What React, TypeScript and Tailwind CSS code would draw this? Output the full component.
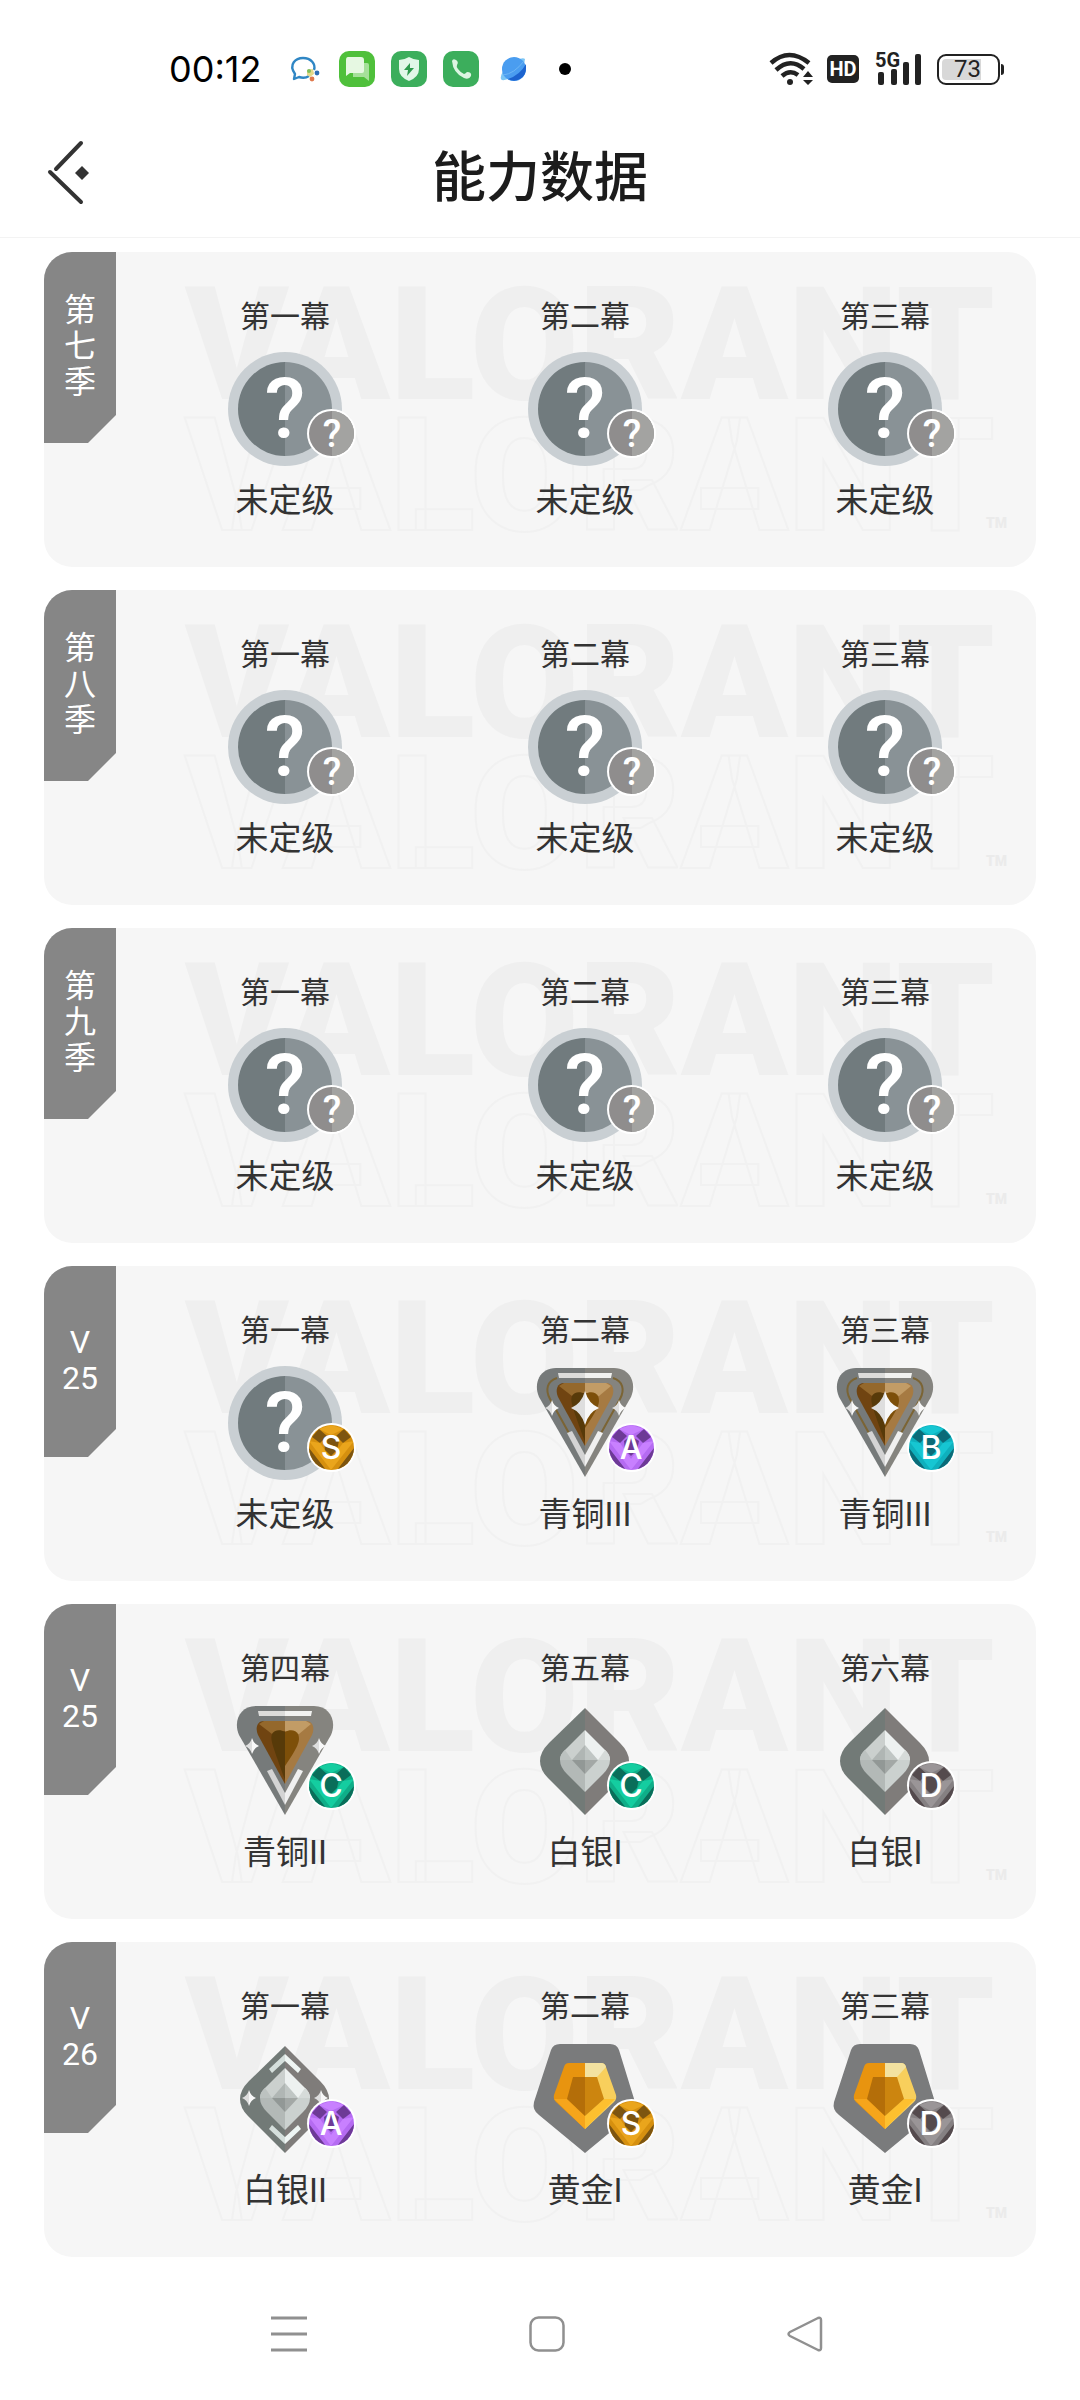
type RankKind = 'unranked' | 'bronze2' | 'bronze3' | 'silver1' | 'silver2' | 'gold1';
type Grade = '?' | 'S' | 'A' | 'B' | 'C' | 'D';

interface Act {
  name: string;
  kind: RankKind;
  grade: Grade;
  rank: string;
}

interface Season {
  label: string[];
  acts: Act[];
}

const unrankedActs: Act[] = [
  { name: '第一幕', kind: 'unranked', grade: '?', rank: '未定级' },
  { name: '第二幕', kind: 'unranked', grade: '?', rank: '未定级' },
  { name: '第三幕', kind: 'unranked', grade: '?', rank: '未定级' },
];

const seasons: Season[] = [
  { label: ['第', '七', '季'], acts: unrankedActs },
  { label: ['第', '八', '季'], acts: unrankedActs },
  { label: ['第', '九', '季'], acts: unrankedActs },
  {
    label: ['V', '25'],
    acts: [
      { name: '第一幕', kind: 'unranked', grade: 'S', rank: '未定级' },
      { name: '第二幕', kind: 'bronze3', grade: 'A', rank: '青铜III' },
      { name: '第三幕', kind: 'bronze3', grade: 'B', rank: '青铜III' },
    ],
  },
  {
    label: ['V', '25'],
    acts: [
      { name: '第四幕', kind: 'bronze2', grade: 'C', rank: '青铜II' },
      { name: '第五幕', kind: 'silver1', grade: 'C', rank: '白银I' },
      { name: '第六幕', kind: 'silver1', grade: 'D', rank: '白银I' },
    ],
  },
  {
    label: ['V', '26'],
    acts: [
      { name: '第一幕', kind: 'silver2', grade: 'A', rank: '白银II' },
      { name: '第二幕', kind: 'gold1', grade: 'S', rank: '黄金I' },
      { name: '第三幕', kind: 'gold1', grade: 'D', rank: '黄金I' },
    ],
  },
];

// base, light facet, dark facet
const gradeColors: Record<Grade, [string, string, string]> = {
  '?': ['#8f8d8d', '#a3a3a1', '#8f8d8d'],
  S: ['#d6900f', '#eaa51c', '#7d5510'],
  A: ['#b56bf2', '#c880ff', '#6d3a96'],
  B: ['#0fb0bd', '#16c6d2', '#0b6b78'],
  C: ['#0fae88', '#14cda0', '#0a6e5a'],
  D: ['#858082', '#9a9597', '#544a4d'],
};

function Star({ x, y, rx, ry }: { x: number; y: number; rx: number; ry: number }) {
  const k = 0.25;
  return (
    <g>
      <path
        fill="#dedede"
        d={`M${x} ${y - ry} Q${x - rx * k} ${y - ry * k} ${x - rx} ${y} Q${x - rx * k} ${y + ry * k} ${x} ${y + ry}Z`}
      />
      <path
        fill="#f8f8f8"
        d={`M${x} ${y - ry} Q${x + rx * k} ${y - ry * k} ${x + rx} ${y} Q${x + rx * k} ${y + ry * k} ${x} ${y + ry}Z`}
      />
    </g>
  );
}

function Unranked() {
  return (
    <>
      <circle cx="57" cy="57" r="57" fill="#c9cfd3" />
      <path d="M57 10 A47 47 0 0 0 57 104Z" fill="#717b7e" />
      <path d="M57 10 A47 47 0 0 1 57 104Z" fill="#899296" />
      <text
        x="57"
        y="86"
        textAnchor="middle"
        fill="#fff"
        className="font-['Roboto',sans-serif] text-[84px] font-medium"
      >
        ?
      </text>
    </>
  );
}

function Bronze({ top }: { top: boolean }) {
  return (
    <>
      <path d="M57 2 H28 C12 2 5 17 11 31 L57 111Z" fill="#767a7a" />
      <path d="M57 2 H86 C102 2 109 17 103 31 L57 111Z" fill="#85847f" />
      {top && (
        <g fill="none" stroke="#7b6434" strokeWidth="2">
          <path d="M29 12 C19 15 17 24 22 33 L42 69" />
          <path d="M85 12 C95 15 97 24 92 33 L72 69" />
        </g>
      )}
      <path d="M30 7 H57 V12 H31Z" fill="#dcdcda" />
      <path d="M57 7 H84 L83 12 H57Z" fill="#f2f2f0" />
      <path d="M57 17 H36 C29 17 27 24 30 31 L57 80Z" fill="#704411" />
      <path d="M57 17 H78 C85 17 87 24 84 31 L57 80Z" fill="#a67a42" />
      <path d="M57 17 H36 L31 20 L44 30 L57 27Z" fill="#94682c" />
      <path d="M57 17 H78 L83 20 L71 30 L57 27Z" fill="#c29c66" />
      <path d="M57 28 C52 25 46 26 44 30 C42 36 45 42 57 76Z" fill="#573a09" />
      <path d="M57 28 C62 25 68 26 70 30 C73 37 69 44 57 62Z" fill="#7d4f09" />
      <path d="M39 67 L44 65 L57 89 V101Z" fill="#d4d4d4" />
      <path d="M75 67 L70 65 L57 89 V101Z" fill="#f0f0f0" />
      {top && <Star x={57} y={42} rx={14} ry={17} />}
      <Star x={24} y={42} rx={7} ry={8} />
      <Star x={91} y={42} rx={7} ry={8} />
    </>
  );
}

function Silver({ top }: { top: boolean }) {
  return (
    <>
      <path d="M57 4 L21 39 Q12 48 12 57 Q12 66 20 74 L57 111Z" fill="#727a77" />
      <path d="M57 4 L92 39 Q101 48 101 57 Q101 66 94 74 L57 111Z" fill="#7f7c7a" />
      <path d="M57 26 L39 44 Q32 50 32 56 H57Z" fill="#cbd0ce" />
      <path d="M57 26 L75 44 Q82 50 82 56 H57Z" fill="#edf1f0" />
      <path d="M57 88 L39 70 Q32 63 32 56 H57Z" fill="#b3b9b7" />
      <path d="M57 88 L75 70 Q82 63 82 56 H57Z" fill="#cbd1cf" />
      <path d="M32 56 Q32 50 37 46 L44 56Z" fill="#bcc2c0" />
      <path d="M82 56 Q82 50 77 46 L70 56Z" fill="#d6dbd9" />
      <path d="M57 41 L44 56 H57Z" fill="#b0b6b4" />
      <path d="M57 41 L70 56 H57Z" fill="#c0c6c4" />
      <path d="M57 70 L44 56 H57Z" fill="#929896" />
      <path d="M57 70 L70 56 H57Z" fill="#a3a8a6" />
      {top && (
        <>
          <path d="M57 12 L41 27 L44 31 L57 19Z M57 102 L41 87 L44 83 L57 95Z" fill="#d5dfdc" />
          <path d="M57 12 L73 27 L70 31 L57 19Z M57 102 L73 87 L70 83 L57 95Z" fill="#eef5f3" />
          <Star x={21} y={56} rx={7} ry={8} />
          <Star x={93} y={56} rx={7} ry={8} />
        </>
      )}
    </>
  );
}

function Gold() {
  return (
    <>
      <path
        d="M32 2 H82 Q89 2 91 8 L107 60 Q109 68 103 73 L57 111 L11 73 Q4 68 6 60 L23 8 Q25 2 32 2Z"
        fill="#7a7b7c"
      />
      <path d="M57 21 H41 Q37 21 36 25 L26 53 Q25 57 28 60 L57 87Z" fill="#e8940f" />
      <path d="M57 21 H73 Q77 21 78 25 L88 53 Q89 57 86 60 L57 87Z" fill="#f8cf5c" />
      <path d="M57 21 H73 Q77 21 78 25 L69 35 H57Z" fill="#f3e2a0" />
      <path d="M57 74 L76 57 L87 57 L57 87Z" fill="#fdc02f" />
      <path d="M57 74 L39 57 L26 57 L57 87Z" fill="#f6a51b" />
      <path d="M57 35 H45 L39 57 L57 74Z" fill="#b46e09" />
      <path d="M57 35 H69 L76 57 L57 74Z" fill="#cc850f" />
    </>
  );
}

function Emblem({ kind }: { kind: RankKind }) {
  return (
    <svg viewBox="0 0 114 114" className="size-full" aria-hidden="true">
      {kind === 'unranked' && <Unranked />}
      {kind === 'bronze2' && <Bronze top={false} />}
      {kind === 'bronze3' && <Bronze top />}
      {kind === 'silver1' && <Silver top={false} />}
      {kind === 'silver2' && <Silver top />}
      {kind === 'gold1' && <Gold />}
    </svg>
  );
}

function GradeBadge({ grade }: { grade: Grade }) {
  const [base, light, dark] = gradeColors[grade];
  return (
    <span className="absolute -right-[14px] bottom-2 block size-[49px] rounded-full bg-white p-[2px]">
      <svg viewBox="0 0 45 45" className="size-full overflow-hidden rounded-full" role="img" aria-label={grade}>
        <rect width="45" height="45" fill={base} />
        {grade === '?' ? (
          <rect x="23" width="22" height="45" fill={light} />
        ) : (
          <>
            <path d="M10 4 L22 0 L35 4 L22 10Z" fill={light} />
            <path d="M3 12 L10 4 L18 11 L11 18Z" fill={dark} />
            <path d="M42 12 L35 4 L27 11 L34 18Z" fill={dark} />
            <path d="M0 16 L11 18 L22 34 V45Z" fill={light} />
            <path d="M45 16 L34 18 L22 34 V45Z" fill={light} />
            <path d="M0 23 L17 45 H0Z M45 23 L28 45 H45Z" fill={dark} />
            <path d="M15 16 L22 11 L30 16 L28 25 L22 31 L16 25Z" fill={dark} />
          </>
        )}
        {grade === '?' ? (
          <text
            x="23"
            y="36"
            textAnchor="middle"
            fill="#fff"
            className="font-['Roboto',sans-serif] text-[38px] font-medium"
          >
            ?
          </text>
        ) : (
          <text
            x="22"
            y="34"
            textAnchor="middle"
            fill="#fff"
            className="font-['Inter',sans-serif] text-[32px] font-medium"
          >
            {grade}
          </text>
        )}
      </svg>
    </span>
  );
}

function Watermark() {
  return (
    <svg
      viewBox="0 0 992 315"
      className="pointer-events-none absolute inset-0 size-full font-['Roboto',sans-serif] text-[157px] font-black"
      aria-hidden="true"
    >
      <text x="141" y="147" fill="#efefef">
        VALORANT
      </text>
      <text x="141" y="278" fill="none" stroke="#f1f1f1" strokeWidth="2">
        VALORANT
      </text>
      <text x="942" y="276" fill="#ebebeb" className="text-sm">
        TM
      </text>
    </svg>
  );
}

function SeasonCard({ season }: { season: Season }) {
  return (
    <section className="relative flex items-start overflow-hidden rounded-[28px] bg-[#f6f6f6]">
      <Watermark />
      <h2 className="relative flex h-[191px] w-[72px] shrink-0 flex-col items-center justify-center bg-[#868686] pb-1 text-[32px] leading-9 text-white [clip-path:polygon(0_0,100%_0,100%_163px,44px_100%,0_100%)]">
        {season.label.map((part) => (
          <span key={part}>{part}</span>
        ))}
      </h2>
      <ul className="relative ml-[19px] grid grow grid-cols-3 pt-[45px] pr-px pb-[46px] text-[#333]">
        {season.acts.map((act) => (
          <li key={act.name} className="flex flex-col items-center gap-[15px]">
            <h3 className="text-[30px] leading-10">{act.name}</h3>
            <div className="relative size-[114px]">
              <Emblem kind={act.kind} />
              <GradeBadge grade={act.grade} />
            </div>
            <p className="text-[33px] leading-10">{act.rank}</p>
          </li>
        ))}
      </ul>
    </section>
  );
}

function StatusBar() {
  return (
    <div className="flex h-[138px] items-center justify-between pr-[76px] pl-[169px]">
      <div className="flex items-center gap-4 text-black">
        <time className="mr-[10px] font-['Inter',sans-serif] text-4xl">00:12</time>
        <svg viewBox="0 0 36 36" className="size-9" aria-hidden="true">
          <path
            d="M22 25 C19 27 15 27 12 26 L7 28 L8 23 C1 13 9 7 16 7 C24 7 29 13 27 19"
            fill="none"
            stroke="#2f86c4"
            strokeWidth="2.4"
            strokeLinejoin="round"
          />
          <path d="M20 19 L26 18 L27 23 L23 26 L20 24Z" fill="#e4d98a" />
          <circle cx="30" cy="22" r="2.4" fill="#2f6fb5" />
          <circle cx="25" cy="28" r="2.4" fill="#e0794c" />
          <circle cx="22" cy="20" r="2" fill="#7fbf5a" />
        </svg>
        <svg viewBox="0 0 36 36" className="size-9" aria-hidden="true">
          <rect width="36" height="36" rx="10" fill="#4fc03b" />
          <path d="M14 12 H28 Q30 12 30 14 V30 L25 26 H14Z" fill="#a5e09a" />
          <path d="M9 6 H22 Q25 6 25 9 V20 Q25 22 23 22 H11 L7 25 V9 Q7 6 9 6Z" fill="#e6f8e2" />
        </svg>
        <svg viewBox="0 0 36 36" className="size-9" aria-hidden="true">
          <rect width="36" height="36" rx="10" fill="#3cae5c" />
          <path d="M18 6 Q23 9 28 9 V18 Q28 26 18 30 Q8 26 8 18 V9 Q13 9 18 6Z" fill="#e2f7e8" />
          <path d="M19 12 L13 19 H17 L16 25 L23 17 H19Z" fill="#2f9a4d" />
        </svg>
        <svg viewBox="0 0 36 36" className="size-9" aria-hidden="true">
          <rect width="36" height="36" rx="10" fill="#3cae5c" />
          <path
            d="M9 10 Q10 7 13 9 Q16 11 14 14 Q13 16 15 18 Q18 22 21 23 Q22 23 24 21 Q29 21 28 25 Q26 29 21 27 Q10 22 9 10Z"
            fill="#dcf5e2"
          />
        </svg>
        <svg viewBox="0 0 36 36" className="size-9" aria-hidden="true">
          <path d="M8 20 Q4 28 7 29 Q12 30 20 23 Q30 14 30 8 Q28 6 22 9Z" fill="#7cc6f5" />
          <circle cx="19" cy="18" r="12" fill="#4a9df0" />
          <path d="M31 17 A12 12 0 0 1 13 28 Q25 24 31 13Z" fill="#1c63cf" />
          <path d="M8 24 Q19 23 29 10" fill="none" stroke="#6db6f5" strokeWidth="1" />
        </svg>
        <span className="mx-3 size-3 rounded-full bg-black" />
      </div>
      <div className="flex items-center text-[#222]">
        <svg viewBox="0 0 46 34" className="h-[34px] w-[46px]" fill="none" stroke="currentColor" aria-hidden="true">
          <path d="M2 11 Q20 -5 40 11" strokeWidth="4.5" />
          <path d="M7 18 Q21 5 35 17" strokeWidth="4.5" />
          <path d="M13 24 Q21 17 29 23" strokeWidth="4.5" />
          <circle cx="21" cy="30" r="3" fill="currentColor" stroke="none" />
          <path d="M39 19 L44 25 H34Z M39 33 L44 28 H34Z" fill="currentColor" stroke="none" />
        </svg>
        <span className="ml-3 flex h-7 w-8 items-center justify-center rounded-[5px] bg-[#222] font-['Roboto',sans-serif] text-xl leading-none font-bold text-white">
          HD
        </span>
        <svg viewBox="0 0 48 42" className="ml-4 h-[42px] w-12" fill="currentColor" aria-hidden="true">
          <text x="0" y="19" className="font-['Roboto',sans-serif] text-[20px] font-bold">
            5G
          </text>
          <rect x="3" y="24" width="6" height="13" rx="2" />
          <rect x="16" y="21" width="6" height="16" rx="2" />
          <rect x="28" y="14" width="6" height="23" rx="2" />
          <rect x="40" y="6" width="6" height="31" rx="2" />
        </svg>
        <span className="ml-[14px] flex h-[31px] w-[63px] items-center rounded-[9px] border-2 border-[#222] p-[3px]">
          <span className="flex h-full w-[39px] items-center justify-end rounded-l-[4px] bg-[#d8d8d8] font-['Roboto',sans-serif] text-2xl leading-none">
            73
          </span>
        </span>
        <span className="ml-px h-[11px] w-[3px] rounded-r-sm bg-[#222]" />
      </div>
    </div>
  );
}

export default function App() {
  return (
    <div className="min-h-screen bg-white font-['Roboto','Noto_Sans_CJK_SC',sans-serif]">
      <StatusBar />

      <header className="grid grid-cols-[1fr_auto_1fr] items-start border-b border-[#f3f3f3] pb-[17px]">
        <button type="button" aria-label="返回" className="ml-11 w-fit pt-[2px]">
          <svg viewBox="0 0 50 66" className="h-[66px] w-[50px]" fill="none" stroke="#333" strokeWidth="4" aria-hidden="true">
            <path d="M37 3 L12 29 M6 32 L37 62" strokeLinecap="round" />
            <path d="M38 26 L45 33 L38 40 L31 33Z" fill="#333" stroke="none" />
          </svg>
        </button>
        <h1 className="text-[54px] leading-[82px] font-medium text-[#1c1c1c]">能力数据</h1>
      </header>

      <main className="flex flex-col gap-[23px] px-11 pt-[14px]">
        {seasons.map((season, i) => (
          <SeasonCard key={i} season={season} />
        ))}
      </main>

      <nav className="flex justify-center gap-[222px] pt-[59px] pb-[47px] pl-[14px]">
        <button type="button" aria-label="菜单">
          <svg viewBox="0 0 36 36" className="size-9" stroke="#909090" strokeWidth="3" aria-hidden="true">
            <path d="M0 2 H36 M0 18 H36 M0 34 H36" />
          </svg>
        </button>
        <button type="button" aria-label="主页">
          <svg viewBox="0 0 36 36" className="size-9" fill="none" stroke="#909090" strokeWidth="2.5" aria-hidden="true">
            <rect x="1.5" y="1.5" width="33" height="33" rx="8" />
          </svg>
        </button>
        <button type="button" aria-label="后退">
          <svg viewBox="0 0 36 36" className="size-9" fill="none" stroke="#909090" strokeWidth="3" aria-hidden="true">
            <path
              d="M34 4 V32 Q34 35 31 34 L3 20 Q0 18 3 16 L31 2 Q34 1 34 4Z"
              strokeWidth="2.5"
              strokeLinejoin="round"
            />
          </svg>
        </button>
      </nav>
    </div>
  );
}
